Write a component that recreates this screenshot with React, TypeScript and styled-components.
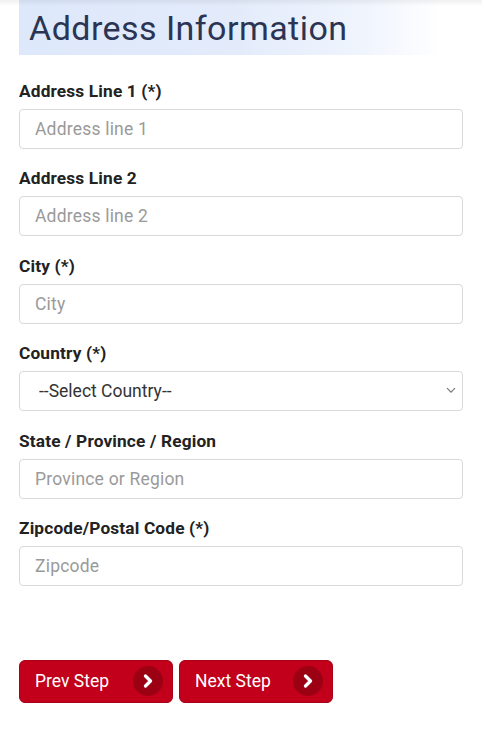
import React from "react";
import styled, { createGlobalStyle } from "styled-components";

const Global = createGlobalStyle`
  html, body { margin: 0; padding: 0; background: #fff; }
  body { font-family: Roboto, "Liberation Sans", Arial, sans-serif; }
  * { box-sizing: border-box; }
`;

const Page = styled.div`
  position: relative;
  width: 482px;
  min-height: 740px;
  background: #fff;
  padding: 0 19px;
  &::before {
    content: "";
    position: absolute;
    left: 0; right: 0; top: 0;
    height: 6px;
    background: linear-gradient(to bottom, rgba(0,0,0,0.06), rgba(0,0,0,0));
  }
`;

const Header = styled.div`
  height: 55px;
  width: 425px;
  padding-left: 10px;
  display: flex;
  align-items: center;
  background: linear-gradient(to right, #dde8fa 0%, #e3ebfb 50%, #eff4fd 80%, #ffffff 100%);
  margin-bottom: 27px;
`;

const Title = styled.h1`
  margin: 0;
  padding-top: 1px;
  font-size: 34px;
  font-weight: 400;
  color: #2b3453;
  letter-spacing: 0.45px;
`;

const Field = styled.div`
  display: flex;
  flex-direction: column;
  margin-bottom: 20.4px;
`;

const Label = styled.label`
  font-size: 17.3px;
  font-weight: 700;
  line-height: 18px;
  letter-spacing: 0.15px;
  color: #222;
  margin-bottom: 9px;
`;

const Input = styled.input`
  width: 444px;
  height: 40px;
  border: 1px solid #d9d9d9;
  border-radius: 4px;
  padding: 0 15px;
  font-family: inherit;
  font-size: 17.5px;
  letter-spacing: 0.2px;
  color: #333;
  background: #fff;
  outline: none;
  &::placeholder { color: #9a9a9a; }
`;

const SelectWrap = styled.div`
  position: relative;
  width: 444px;
  height: 40px;
`;

const Select = styled.select`
  appearance: none;
  width: 100%;
  height: 100%;
  border: 1px solid #d9d9d9;
  border-radius: 4px;
  padding: 0 19px;
  font-family: inherit;
  font-size: 17.5px;
  color: #333;
  background: #fff;
  outline: none;
`;

const Caret = styled.svg`
  position: absolute;
  right: 7px;
  top: 16px;
  pointer-events: none;
`;

const Buttons = styled.div`
  display: flex;
  gap: 6px;
  margin-top: 74px;
`;

const StepButton = styled.button`
  width: 154px;
  height: 43px;
  display: flex;
  align-items: center;
  justify-content: space-between;
  padding: 0 9px 0 15px;
  background: #c2001b;
  border: 1px solid #a80015;
  border-radius: 6px;
  color: #fff;
  font-family: inherit;
  font-size: 17.5px;
  cursor: pointer;
`;

const Circle = styled.span`
  width: 30px;
  height: 30px;
  border-radius: 50%;
  background: #9c0013;
  display: flex;
  align-items: center;
  justify-content: center;
`;

const Chevron = () => (
  <svg width="12" height="14" viewBox="0 0 12 14">
    <path d="M3.5 2 L8.5 7 L3.5 12" fill="none" stroke="#fff" strokeWidth="3.2" strokeLinecap="round" strokeLinejoin="round" />
  </svg>
);

const fields: { label: string; placeholder: string }[] = [
  { label: "Address Line 1 (*)", placeholder: "Address line 1" },
  { label: "Address Line 2", placeholder: "Address line 2" },
  { label: "City (*)", placeholder: "City" },
];

export default function App() {
  return (
    <Page>
      <Global />
      <Header>
        <Title>Address Information</Title>
      </Header>
      {fields.map((f) => (
        <Field key={f.label}>
          <Label>{f.label}</Label>
          <Input placeholder={f.placeholder} />
        </Field>
      ))}
      <Field>
        <Label>Country (*)</Label>
        <SelectWrap>
          <Select defaultValue="">
            <option value="">--Select Country--</option>
          </Select>
          <Caret width="10" height="7" viewBox="0 0 10 7">
            <path d="M1 1.2 L5 5.2 L9 1.2" fill="none" stroke="#777" strokeWidth="1.2" />
          </Caret>
        </SelectWrap>
      </Field>
      <Field>
        <Label>State / Province / Region</Label>
        <Input placeholder="Province or Region" />
      </Field>
      <Field>
        <Label>Zipcode/Postal Code (*)</Label>
        <Input placeholder="Zipcode" />
      </Field>
      <Buttons>
        <StepButton>
          Prev Step
          <Circle><Chevron /></Circle>
        </StepButton>
        <StepButton>
          Next Step
          <Circle><Chevron /></Circle>
        </StepButton>
      </Buttons>
    </Page>
  );
}
